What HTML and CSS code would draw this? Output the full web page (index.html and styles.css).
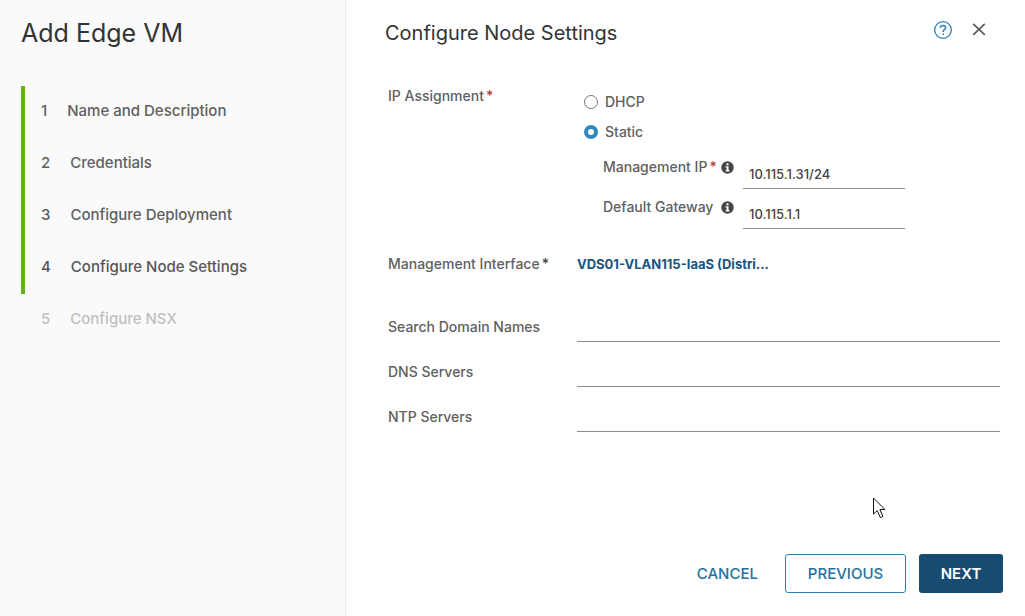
FILE: index.html
```html
<!DOCTYPE html>
<html lang="en">
<head>
<meta charset="utf-8">
<meta name="viewport" content="width=device-width, initial-scale=1">
<title>Add Edge VM</title>
<link rel="stylesheet" href="styles.css">
</head>
<body>
<div class="wizard">
  <aside class="sidebar">
    <h1 class="wizard-title">Add Edge VM</h1>
    <ol class="steps">
      <li class="step done"><span class="step-number">1</span>Name and Description</li>
      <li class="step done"><span class="step-number">2</span>Credentials</li>
      <li class="step done"><span class="step-number">3</span>Configure Deployment</li>
      <li class="step done current" aria-current="step"><span class="step-number">4</span>Configure Node Settings</li>
      <li class="step"><span class="step-number">5</span>Configure NSX</li>
    </ol>
  </aside>
  <main class="content">
    <header class="header">
      <h2 class="page-title">Configure Node Settings</h2>
      <button class="icon-button" type="button" aria-label="Help">
        <svg width="20" height="20" viewBox="0 0 20 20" fill="none" stroke="#2b80b0" stroke-width="1.3"><circle cx="10" cy="10" r="8.3"/><path d="M7.2 7.8C7.3 6.2 8.4 5.4 10 5.4s2.7.9 2.7 2.3c0 2-2.6 2-2.6 4.2" stroke-width="1.5"/><circle cx="10.1" cy="14.2" r=".9" fill="#2b80b0" stroke="none"/></svg>
      </button>
      <button class="icon-button" type="button" aria-label="Close">
        <svg width="20" height="20" viewBox="0 0 20 20" fill="none" stroke="#5a5a5a" stroke-width="1.7"><path d="M4.2 3.800l11.600 11M15.800 3.800l-11.600 11"/></svg>
      </button>
    </header>
    <form class="form">
      <div class="row" role="radiogroup" aria-labelledby="ip-label">
        <span id="ip-label">IP Assignment<span class="required">*</span></span>
        <div class="assignment">
          <label class="choice"><input class="radio" type="radio" name="ip">DHCP</label>
          <label class="choice"><input class="radio" type="radio" name="ip" checked>Static</label>
          <div class="static-fields">
            <div class="sub-row">
              <label class="sub-label" for="mgmt-ip"><span>Management IP<span class="required">*</span></span>
                <svg class="info" width="13" height="13" viewBox="0 0 13 13"><circle cx="6.500" cy="6.500" r="6.200" fill="#454545"/><path d="M5.500 2.300h2v2h-2zM4.600 5.300h2.900v4h1v1.300h-4V9.300h1V6.600h-.9z" fill="#fff"/></svg>
              </label>
              <input class="field" id="mgmt-ip" type="text" value="10.115.1.31/24">
            </div>
            <div class="sub-row">
              <label class="sub-label" for="gateway"><span>Default Gateway</span>
                <svg class="info" width="13" height="13" viewBox="0 0 13 13"><circle cx="6.500" cy="6.500" r="6.200" fill="#454545"/><path d="M5.500 2.300h2v2h-2zM4.600 5.300h2.900v4h1v1.300h-4V9.300h1V6.600h-.9z" fill="#fff"/></svg>
              </label>
              <input class="field" id="gateway" type="text" value="10.115.1.1">
            </div>
          </div>
        </div>
      </div>
      <div class="row interface-row">
        <span>Management Interface<span class="required dark">*</span></span>
        <a class="interface-link" href="#">VDS01-VLAN115-IaaS (Distri...</a>
      </div>
      <div class="servers">
        <div class="row"><label for="domains">Search Domain Names</label><input class="field wide" id="domains" type="text"></div>
        <div class="row"><label for="dns">DNS Servers</label><input class="field wide" id="dns" type="text"></div>
        <div class="row"><label for="ntp">NTP Servers</label><input class="field wide" id="ntp" type="text"></div>
      </div>
    </form>
    <footer class="footer">
      <button class="button link" type="button">CANCEL</button>
      <button class="button outline" type="button">PREVIOUS</button>
      <button class="button primary" type="button">NEXT</button>
    </footer>
  </main>
  <svg class="pointer" width="14" height="22" viewBox="0 0 14 22"><path d="M1.500 1v16l3.700-3.500 3.100 7.100 2.600-1.200-3-6.900h5z" fill="#fff" stroke="#111" stroke-width="1"/></svg>
</div>
</body>
</html>
```
FILE: styles.css
```css
* { box-sizing: border-box; }

body {
  margin: 0;
  font: 500 14px/20px Inter, "Liberation Sans", sans-serif;
  color: #606060;
  background: #fff;
}

.wizard {
  position: relative;
  display: grid;
  grid-template-columns: 346px 1fr;
  min-height: 100vh;
}

.sidebar {
  padding: 17px 21px;
  background: #fafafa;
  border-right: 1px solid #ececec;
}

.wizard-title,
.page-title {
  margin: 0;
  font-weight: 400;
  line-height: 32px;
  color: #333;
}

.wizard-title { font-size: 25px; }
.page-title { font-size: 20px; flex: 1; }

.steps {
  margin: 37px 0 0;
  padding: 0;
  list-style: none;
}

.step {
  padding-left: 16px;
  border-left: 4px solid transparent;
  font-size: 15px;
  line-height: 50px;
  height: 52px;
  color: #c0c0c0;
}

.step.done {
  border-left-color: #60b515;
  color: #606060;
}

.step.current { color: #565656; }
.step-number { margin-right: 20px; }

.content {
  display: flex;
  flex-direction: column;
  padding: 0 22px 23px 39px;
}

.header {
  display: flex;
  align-items: flex-start;
  gap: 16px;
  padding: 17px 14px 15px 0;
}

.icon-button {
  display: flex;
  padding: 3px 0;
  border: 0;
  background: none;
  cursor: pointer;
}

.form {
  padding: 22px 3px 0;
}

.row {
  display: grid;
  grid-template-columns: 189px 1fr;
}

.required { color: #b5403a; margin-left: 2px; }
.required.dark { color: #454545; }

.assignment {
  display: flex;
  flex-direction: column;
  gap: 10px;
  padding-top: 6px;
}

.choice {
  display: flex;
  align-items: center;
  gap: 7px;
  padding-left: 7px;
}

.radio {
  appearance: none;
  width: 14px;
  height: 14px;
  margin: 0;
  border: 1px solid #777;
  border-radius: 50%;
  background: #fff;
}

.radio:checked { border: 4px solid #3288be; }

.static-fields {
  display: flex;
  flex-direction: column;
  gap: 8px;
  padding: 5px 0 0 26px;
}

.sub-row {
  display: flex;
  gap: 9px;
}

.sub-label {
  display: flex;
  justify-content: space-between;
  width: 131px;
  white-space: nowrap;
}

.info { margin-top: 4px; flex: none; }

.field {
  width: 162px;
  height: 32px;
  padding: 2px 6px 0;
  border: 0;
  border-bottom: 1px solid #8c8c8c;
  border-radius: 0;
  background: transparent;
  font: 500 13px/20px Inter, "Liberation Sans", sans-serif;
  color: #444;
}

.field.wide {
  width: 100%;
  height: 25px;
}

.interface-row { margin-top: 25px; }

.interface-link {
  font-size: 13px;
  font-weight: 700;
  color: #195580;
  text-decoration: none;
}

.servers {
  display: flex;
  flex-direction: column;
  gap: 20px;
  margin-top: 43px;
}

.footer {
  display: flex;
  justify-content: flex-end;
  gap: 13px;
  margin-top: auto;
}

.button {
  height: 39px;
  padding: 0 20px;
  border: 1px solid transparent;
  border-radius: 3px;
  background: none;
  font: 500 15px/20px Inter, "Liberation Sans", sans-serif;
  color: #24709f;
  cursor: pointer;
}

.button.link { padding: 0 13px; }
.button.outline { min-width: 121px; border-color: #2b80b0; background: #fff; }
.button.primary { min-width: 84px; background: #174b72; color: #fff; font-weight: 600; }

.pointer {
  position: absolute;
  left: 872px;
  top: 497px;
}
```
